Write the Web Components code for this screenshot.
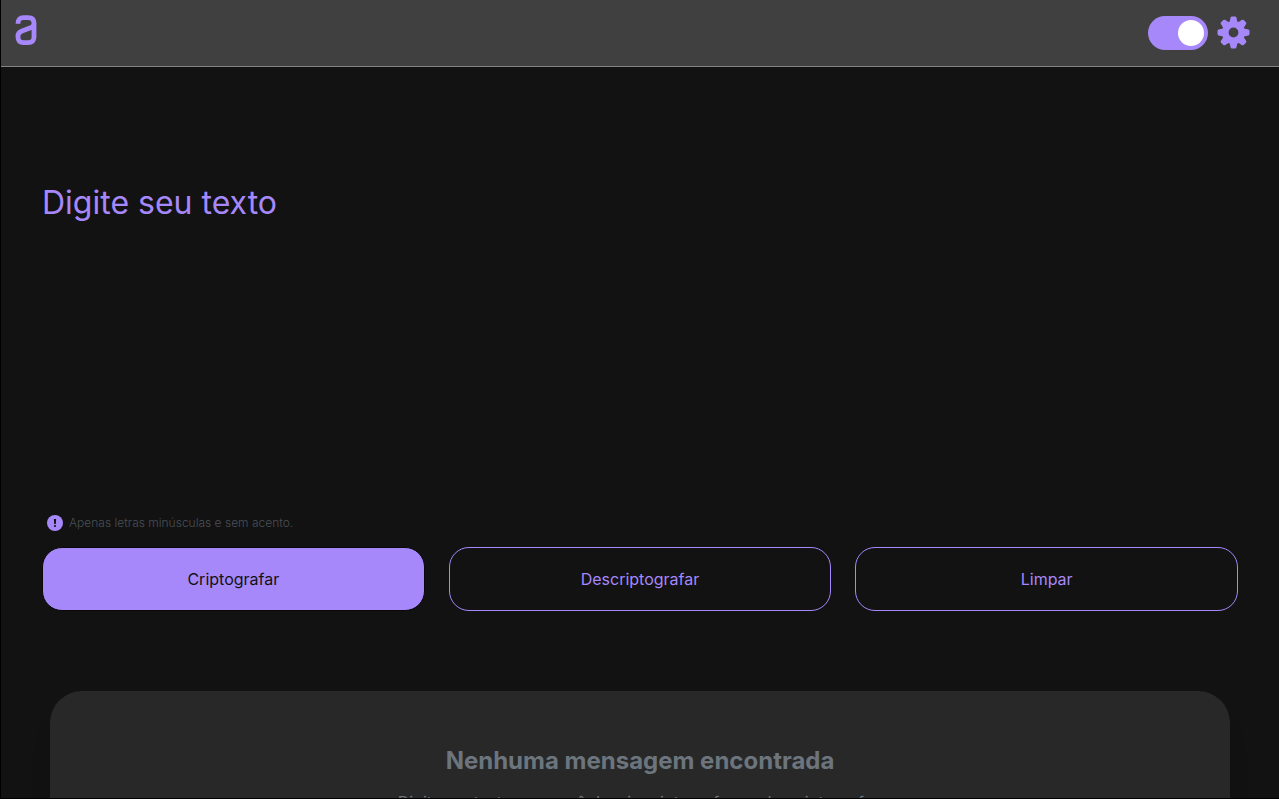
<!DOCTYPE html>
<html lang="pt-BR">
<head>
<meta charset="utf-8">
<meta name="viewport" content="width=device-width, initial-scale=1">
<title>Decodificador</title>
<style>
html, body { margin: 0; background: #121212; }
body {
  --accent: #a688fa;
  --surface: #121212;
  --bar: #404040;
  --card: #282828;
  font-family: Inter, "Liberation Sans", sans-serif;
  font-size: 16px;
}
</style>
</head>
<body>
<crypto-app></crypto-app>
<script>
function define(name, html, setup) {
  const template = document.createElement('template');
  template.innerHTML = html;
  customElements.define(name, class extends HTMLElement {
    constructor() {
      super();
      this.attachShadow({ mode: 'open' }).append(template.content.cloneNode(true));
    }
    connectedCallback() { if (setup) setup(this, this.shadowRoot); }
  });
}

define('brand-logo', `
<style>
:host { display: block; }
a { display: block; }
svg { display: block; width: 24px; height: 32px; }
</style>
<a href="#" aria-label="Início">
<svg viewBox="0 0 24 32" fill="none" stroke="var(--accent)" stroke-width="4.800">
<path d="M4 9.800V9.500Q4 3.700 9.500 3.700H14.200Q20 3.700 20 9.500V23Q20 28.700 14.200 28.700H9.500Q4 28.700 4 23V22Q4 18.500 8 17L16.500 13.800Q20 12.300 20 9.500"/>
</svg></a>`);

define('theme-toggle', `
<style>
:host { display: block; }
input {
  appearance: none; display: flex; align-items: center; box-sizing: border-box;
  width: 60px; height: 34px; margin: 0; padding: 4px; border-radius: 17px;
  background: #777; cursor: pointer;
}
input::before { content: ""; width: 26px; height: 26px; border-radius: 50%; background: #fff; }
input:checked { justify-content: flex-end; background: var(--accent); }
</style>
<input type="checkbox" role="switch" aria-label="Tema escuro" checked>`);

define('settings-button', `
<style>
:host { display: block; }
button { display: block; padding: 0; border: 0; background: none; cursor: pointer; color: var(--accent); }
svg { display: block; width: 34px; height: 34px; }
</style>
<button type="button" aria-label="Configurações">
<svg viewBox="-17.500 -16.500 34 34" fill="currentColor">
<circle r="8.200" fill="none" stroke="currentColor" stroke-width="6.600"/>
<g id="pair"><path id="tooth" d="M-4-10L-2.900-15Q-2.600-16-1.600-16H1.600Q2.600-16 2.900-15L4-10Z"/><use href="#tooth" transform="rotate(180)"/></g>
<use href="#pair" transform="rotate(45)"/><use href="#pair" transform="rotate(90)"/><use href="#pair" transform="rotate(135)"/>
</svg></button>`);

define('top-bar', `
<style>
:host { display: block; background: var(--bar); border-bottom: 1px solid #848484; }
header { display: flex; align-items: center; justify-content: space-between; padding: 16px 29px 16px 13px; }
.tools { display: flex; align-items: center; gap: 8px; }
brand-logo { align-self: flex-start; margin-top: -2px; }
</style>
<header><brand-logo></brand-logo><div class="tools"><theme-toggle></theme-toggle><settings-button></settings-button></div></header>`);

define('message-field', `
<style>
:host { display: block; }
textarea {
  display: block; box-sizing: border-box; width: 100%; height: 328px; padding: 0; border: 0;
  outline: 0; resize: none; background: none; color: var(--accent);
  font: 400 32px/40px Inter, sans-serif;
}
textarea::placeholder { color: var(--accent); opacity: 1; }
</style>
<textarea aria-label="Mensagem" placeholder="Digite seu texto"></textarea>`);

define('field-hint', `
<style>
:host { display: block; }
p { display: flex; align-items: center; gap: 6px; margin: 0; padding-left: 5px; color: #495057; font-size: 12px; font-weight: 300; line-height: 16px; }
svg { width: 16px; height: 16px; flex: none; }
</style>
<p><svg viewBox="0 0 16 16" aria-hidden="true"><circle cx="8" cy="8" r="8" fill="var(--accent)"/><path d="M6.900 4H9.100L8.800 9H7.200Z" fill="#121212"/><circle cx="8" cy="11" r="1.100" fill="#121212"/></svg><slot></slot></p>`);

define('action-button', `
<style>
:host { display: block; }
button {
  box-sizing: border-box; width: 100%; height: 64px; padding: 0 16px; border: 1px solid var(--accent);
  border-radius: 20px; background: transparent; color: var(--accent);
  font: 400 16px/24px Inter, sans-serif; cursor: pointer;
}
:host([primary]) button { border-color: #080808; background: var(--accent); color: #121212; }
</style>
<button type="button"><slot></slot></button>`);

define('result-card', `
<style>
:host {
  display: block; box-sizing: border-box; min-height: 240px; padding: 54px 32px 32px; border-radius: 32px;
  background: var(--card); color: #6c757d; text-align: center; box-shadow: 0 24px 32px -8px #00000014;
}
h2 { margin: 0 0 13px; font-size: 24px; font-weight: 700; line-height: 32px; }
p { margin: 0; font-size: 16px; line-height: 24px; }
</style>
<h2><slot name="title"></slot></h2><p><slot></slot></p>`);

define('crypto-app', `
<style>
:host { display: block; box-sizing: border-box; height: 100vh; overflow: hidden; border: solid #000; border-width: 0 0 1px 1px; background: var(--surface); }
main { padding: 116px 41px 0 41px; }
field-hint { margin: 4px 0 16px; }
.actions { display: grid; grid-template-columns: repeat(3, 1fr); gap: 24px; }
result-card { margin: 80px 8px 0; }
</style>
<top-bar></top-bar>
<main>
<message-field></message-field>
<field-hint>Apenas letras minúsculas e sem acento.</field-hint>
<div class="actions">
<action-button primary>Criptografar</action-button>
<action-button>Descriptografar</action-button>
<action-button>Limpar</action-button>
</div>
<result-card><span slot="title">Nenhuma mensagem encontrada</span>Digite um texto que você deseja criptografar ou descriptografar.</result-card>
</main>`, (host, root) => {
  const field = root.querySelector('message-field').shadowRoot.querySelector('textarea');
  const pairs = [['e', 'enter'], ['i', 'imes'], ['a', 'ai'], ['o', 'ober'], ['u', 'ufat']];
  const [encrypt, decrypt, clear] = root.querySelectorAll('action-button');
  encrypt.onclick = () => { field.value = field.value.replace(/[eiaou]/g, c => pairs.find(p => p[0] === c)[1]); };
  decrypt.onclick = () => { field.value = pairs.reduce((text, [plain, code]) => text.replaceAll(code, plain), field.value); };
  clear.onclick = () => { field.value = ''; };
});
</script>
</body>
</html>
